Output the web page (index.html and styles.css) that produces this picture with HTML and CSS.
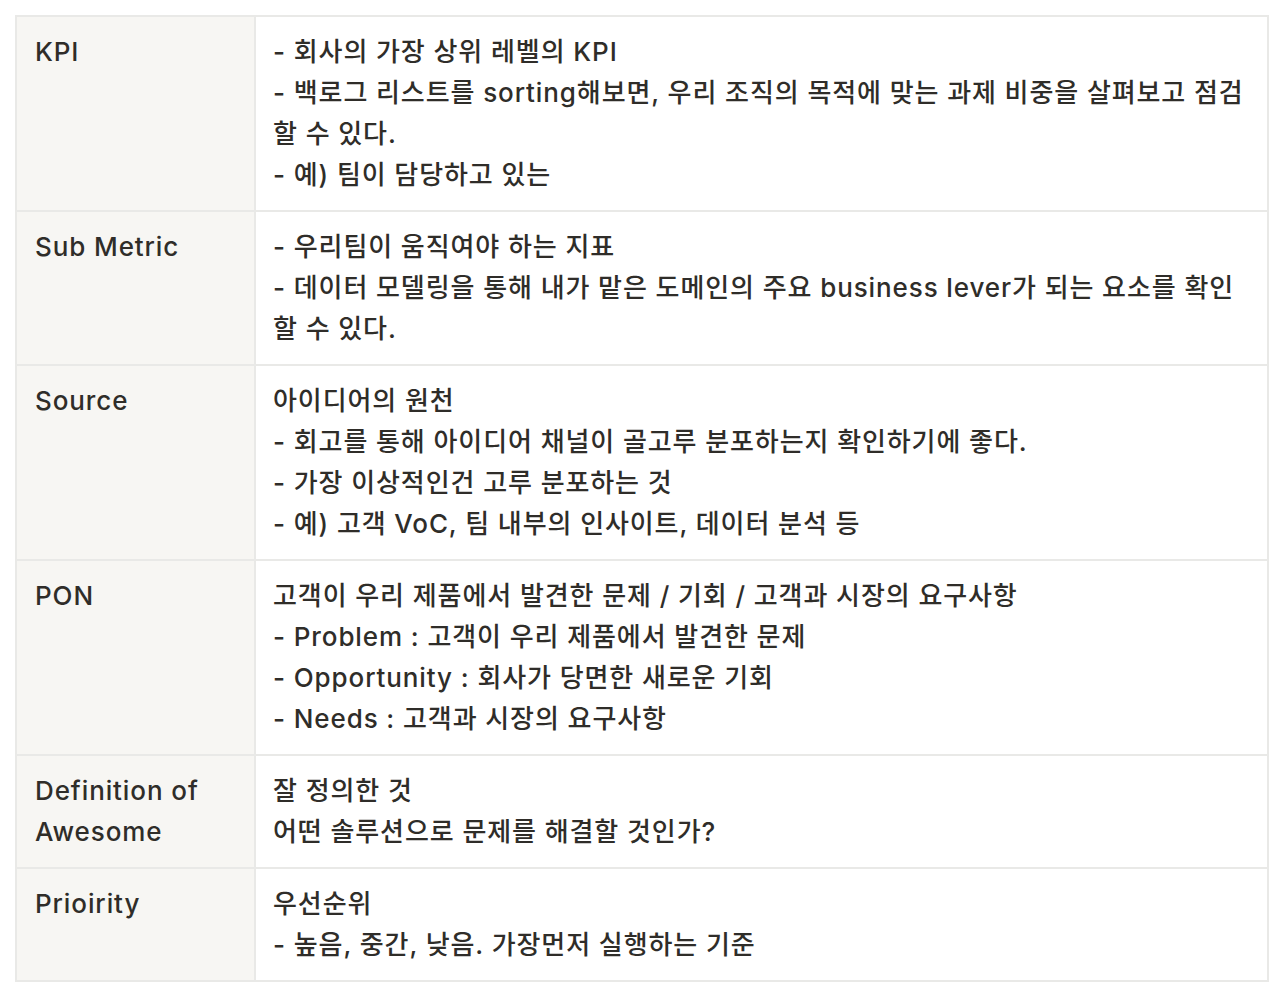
FILE: index.html
```html
<!DOCTYPE html>
<html lang="ko">
<head>
<meta charset="utf-8">
<title>Table</title>
<link rel="stylesheet" href="styles.css">
</head>
<body>
<table class="tbl">
  <tr>
    <th class="key">KPI</th>
    <td class="val">- 회사의 가장 상위 레벨의 KPI<br>- 백로그 리스트를 sorting해보면, 우리 조직의 목적에 맞는 과제 비중을 살펴보고 점검<br>할 수 있다.<br>- 예) 팀이 담당하고 있는</td>
  </tr>
  <tr>
    <th class="key">Sub Metric</th>
    <td class="val">- 우리팀이 움직여야 하는 지표<br>- 데이터 모델링을 통해 내가 맡은 도메인의 주요 business lever가 되는 요소를 확인<br>할 수 있다.</td>
  </tr>
  <tr>
    <th class="key">Source</th>
    <td class="val">아이디어의 원천<br>- 회고를 통해 아이디어 채널이 골고루 분포하는지 확인하기에 좋다.<br>- 가장 이상적인건 고루 분포하는 것<br>- 예) 고객 VoC, 팀 내부의 인사이트, 데이터 분석 등</td>
  </tr>
  <tr>
    <th class="key">PON</th>
    <td class="val">고객이 우리 제품에서 발견한 문제 / 기회 / 고객과 시장의 요구사항<br>- Problem : 고객이 우리 제품에서 발견한 문제<br>- Opportunity : 회사가 당면한 새로운 기회<br>- Needs : 고객과 시장의 요구사항</td>
  </tr>
  <tr>
    <th class="key">Definition of<br>Awesome</th>
    <td class="val">잘 정의한 것<br>어떤 솔루션으로 문제를 해결할 것인가?</td>
  </tr>
  <tr>
    <th class="key">Prioirity</th>
    <td class="val">우선순위<br>- 높음, 중간, 낮음. 가장먼저 실행하는 기준</td>
  </tr>
</table>
</body>
</html>
```

FILE: styles.css
```css
html, body {
  margin: 0;
  padding: 0;
  background: #ffffff;
}
body {
  padding: 15px 11px 0 15px;
  font-family: Inter, "Noto Sans CJK KR", sans-serif;
  color: #2f2d29;
}
.tbl {
  border-collapse: collapse;
  width: 1254px;
  table-layout: fixed;
}
.key, .val {
  border: 2px solid #e9e9e7;
  vertical-align: top;
  text-align: left;
  font-size: 26px;
  letter-spacing: 0.9px;
  line-height: 41px;
  font-weight: 500;
  padding: 14px 18px 15px 18px;
  white-space: nowrap;
}
.key {
  width: 239px;
  box-sizing: border-box;
  background: #f7f6f3;
}
.val {
  background: #ffffff;
  padding-left: 17px;
}
```
